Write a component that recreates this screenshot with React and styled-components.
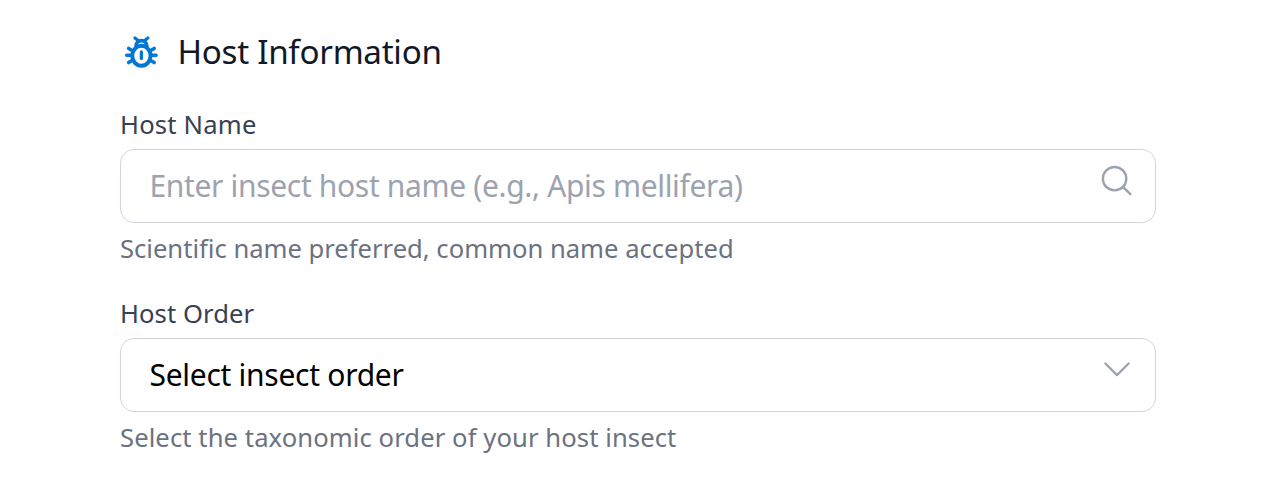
import React from "react";
import styled, { createGlobalStyle } from "styled-components";

const GlobalStyle = createGlobalStyle`
  * { box-sizing: border-box; }
  body { margin: 0; background: #fff; overflow: hidden; font-family: "Segoe UI", "Noto Sans", sans-serif; }
`;

const Section = styled.section`
  height: 477px;
  padding: 28px 115px 0 120px;
`;

const Header = styled.header`
  display: flex;
  align-items: center;
  height: 48px;
`;

const Title = styled.h2`
  margin: 0 0 0 14.5px;
  font-size: 33.2px;
  font-weight: 400;
  line-height: 48px;
  letter-spacing: -0.3px;
  color: #111827;
  white-space: nowrap;
`;

const Field = styled.div`
  display: flex;
  flex-direction: column;
  align-items: stretch;
  height: 189px;
  margin-top: ${(p) => p.$top || 0}px;
`;

const Label = styled.label`
  height: 48px;
  line-height: 48px;
  font-size: 25.6px;
  letter-spacing: ${(p) => p.$spacing || 0}px;
  color: #374151;
`;

const Control = styled.div`
  display: flex;
  align-items: center;
  justify-content: space-between;
  height: 74px;
  padding: 0 20px 0 28.5px;
  border: 1px solid #d1d5db;
  border-radius: 14px;
  background: #fff;
`;

const Value = styled.span`
  font-size: 30px;
  line-height: 72px;
  white-space: nowrap;
  letter-spacing: ${(p) => p.$spacing || 0}px;
  color: ${(p) => (p.$muted ? "#9ca3af" : "#000")};
`;

const Hint = styled.p`
  margin: 0;
  height: 52px;
  line-height: 52px;
  font-size: 25.6px;
  letter-spacing: ${(p) => p.$spacing || 0}px;
  color: #6b7280;
  white-space: nowrap;
`;

const IconSlot = styled.svg`
  flex: none;
  display: block;
  fill: none;
  stroke-linecap: round;
  stroke-linejoin: round;
  margin-bottom: ${(p) => p.$lift || 0}px;
`;

const BugIcon = () => (
  <IconSlot width="43" height="48" viewBox="0 0 43 48" stroke="#0078d4" strokeWidth="3.5">
    <ellipse cx="21.4" cy="27.8" rx="9.1" ry="10" strokeWidth="3.9" />
    <path d="M16.2 19v-1.6a5.2 4.7 0 0 1 10.4 0V19" strokeWidth="3.8" />
    <path d="M14.9 10l3.2 2.6M27.9 10l-3.2 2.6" strokeWidth="3.2" />
    <path d="M8.6 20.4l4.4 2.7M34.2 20.4l-4.4 2.7M6.7 27.2h5M36.1 27.2h-5M8.6 34.6l4.4-2.7M34.2 34.6l-4.4-2.7" />
    <path d="M21.4 24v6.6" strokeWidth="3.3" />
  </IconSlot>
);

const SearchIcon = () => (
  <IconSlot width="36" height="36" viewBox="0 0 36 36" stroke="#9ca3af" strokeWidth="2.4" $lift={11}>
    <circle cx="15.6" cy="15.7" r="11.7" />
    <path d="M24.2 24.2l7.2 7" />
  </IconSlot>
);

const ChevronIcon = () => (
  <IconSlot width="36" height="36" viewBox="0 0 36 36" stroke="#9ca3af" strokeWidth="2.3" $lift={12}>
    <path d="M6.4 12.5L18 24.1l11.6-11.6" />
  </IconSlot>
);

export default function App() {
  return (
    <>
      <GlobalStyle />
      <Section>
        <Header>
          <BugIcon />
          <Title>Host Information</Title>
        </Header>
        <Field $top={25}>
          <Label $spacing={0.2}>Host Name</Label>
          <Control>
            <Value $muted $spacing={-0.34}>Enter insect host name (e.g., Apis mellifera)</Value>
            <SearchIcon />
          </Control>
          <Hint>Scientific name preferred, common name accepted</Hint>
        </Field>
        <Field>
          <Label $spacing={0.08}>Host Order</Label>
          <Control>
            <Value $spacing={-0.28}>Select insect order</Value>
            <ChevronIcon />
          </Control>
          <Hint $spacing={0.09}>Select the taxonomic order of your host insect</Hint>
        </Field>
      </Section>
    </>
  );
}
